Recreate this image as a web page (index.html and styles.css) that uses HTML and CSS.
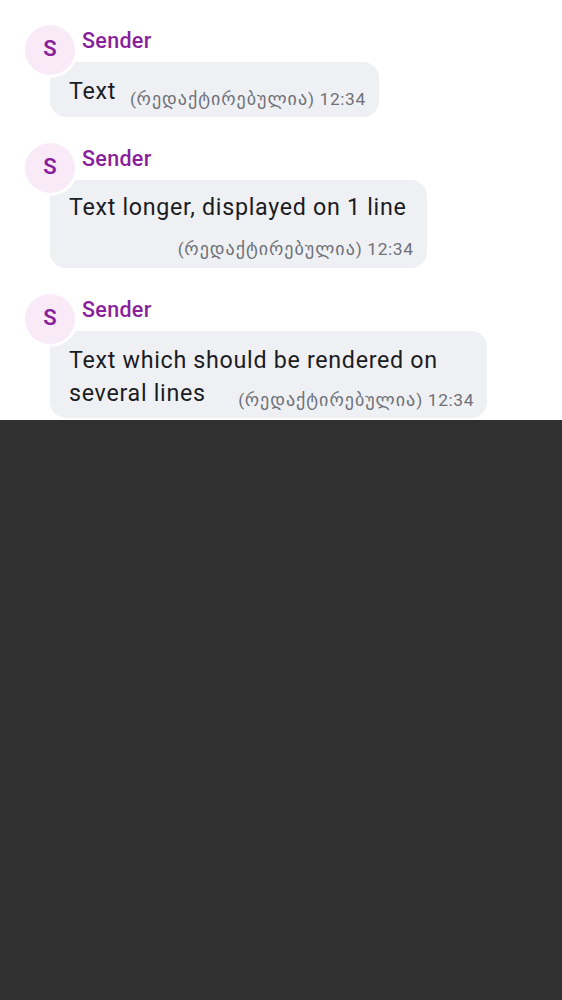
FILE: index.html
```html
<!DOCTYPE html>
<html lang="en">
<head>
<meta charset="utf-8">
<title>Messages</title>
<link rel="stylesheet" href="styles.css">
</head>
<body>
<main class="chat">
  <article class="msg">
    <div class="avatar">S</div>
    <div class="sender">Sender</div>
    <div class="bubble bubble-inline">
      <p class="body">Text</p>
      <span class="meta">(<span class="edited">რედაქტირებულია</span>) 12:34</span>
    </div>
  </article>
  <article class="msg">
    <div class="avatar">S</div>
    <div class="sender">Sender</div>
    <div class="bubble bubble-stacked">
      <p class="body">Text longer, displayed on 1 line</p>
      <span class="meta">(<span class="edited">რედაქტირებულია</span>) 12:34</span>
    </div>
  </article>
  <article class="msg">
    <div class="avatar">S</div>
    <div class="sender">Sender</div>
    <div class="bubble bubble-wrap">
      <p class="body"><span>Text which should be rendered on</span> <span>several lines</span><span class="meta">(<span class="edited">რედაქტირებულია</span>) 12:34</span></p>
    </div>
  </article>
</main>
</body>
</html>
```

FILE: styles.css
```css
html, body {
  margin: 0;
  padding: 0;
}
body {
  background: #303030;
  font-family: Roboto, "DejaVu Sans", sans-serif;
}
.chat {
  background: #ffffff;
  height: 420px;
  overflow: hidden;
  box-sizing: border-box;
  padding-top: 25px;
  display: flex;
  flex-direction: column;
  gap: 26px;
}
.msg {
  display: grid;
  grid-template-columns: 25px 32px 1fr;
  grid-template-rows: 37px auto;
  padding-left: 25px;
}
.avatar {
  grid-column: 1 / 3;
  grid-row: 1 / 3;
  align-self: start;
  width: 50px;
  height: 50px;
  border-radius: 50%;
  background: #f9eaf8;
  box-shadow: 0 0 0 3px #ffffff;
  color: #8a1f9c;
  font-size: 22px;
  font-weight: 600;
  display: flex;
  align-items: center;
  justify-content: center;
  padding-bottom: 3px;
  box-sizing: border-box;
  z-index: 1;
}
.sender {
  grid-column: 3;
  grid-row: 1;
  color: #8a1f9c;
  font-size: 21.5px;
  font-weight: 500;
  letter-spacing: 0.3px;
  line-height: 24px;
  padding-top: 4px;
}
.bubble {
  grid-column: 2 / 4;
  grid-row: 2;
  justify-self: start;
  width: fit-content;
  max-width: 437px;
  box-sizing: border-box;
  background: #eff0f4;
  border-radius: 16px;
  padding: 13px 13px 9px 19px;
  color: #1b1c1f;
}
.body {
  margin: 0;
  font-size: 23.25px;
  letter-spacing: 0.7px;
  line-height: 33px;
  padding-right: 7px;
}
.meta {
  color: #6e7178;
  font-size: 17.4px;
  line-height: 18px;
  white-space: nowrap;
  letter-spacing: 0.58px;
}
.edited {
  font-size: 18px;
  letter-spacing: 1px;
}
.bubble-inline {
  display: flex;
  align-items: flex-end;
}
.bubble-inline .body {
  padding-right: 0;
}
.bubble-inline .meta {
  margin-left: 14px;
}
.bubble-stacked {
  display: flex;
  flex-direction: column;
  padding-top: 11px;
  padding-bottom: 10px;
}
.bubble-stacked .meta {
  align-self: flex-end;
  margin-top: 16px;
}
.bubble-wrap {
  display: flow-root;
  width: 437px;
  padding-bottom: 8px;
}
.bubble-wrap .meta {
  float: right;
  margin-top: 14px;
  margin-right: -7px;
}
```
